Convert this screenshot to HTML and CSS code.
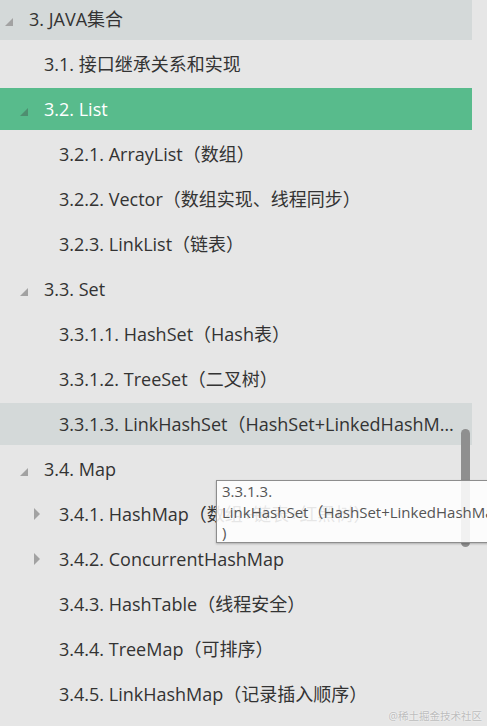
FILE: index.html
```html
<!DOCTYPE html>
<html lang="zh-CN">
<head>
<meta charset="utf-8">
<title>JAVA集合</title>
<link rel="stylesheet" href="styles.css">
</head>
<body>
<div class="pane">
  <ul class="tree">
    <li class="row l1 current"><span class="twisty open"><svg viewBox="0 0 10 10"><polygon points="9,1 9,9 1,9"/></svg></span><span class="label">3. JAVA集合</span></li>
    <li class="row l2"><span class="twisty"></span><span class="label">3.1. 接口继承关系和实现</span></li>
    <li class="row l2 selected"><span class="twisty open"><svg viewBox="0 0 10 10"><polygon points="9,1 9,9 1,9"/></svg></span><span class="label">3.2. List</span></li>
    <li class="row l3"><span class="twisty"></span><span class="label">3.2.1. ArrayList（数组）</span></li>
    <li class="row l3"><span class="twisty"></span><span class="label">3.2.2. Vector（数组实现、线程同步）</span></li>
    <li class="row l3"><span class="twisty"></span><span class="label">3.2.3. LinkList（链表）</span></li>
    <li class="row l2"><span class="twisty open"><svg viewBox="0 0 10 10"><polygon points="9,1 9,9 1,9"/></svg></span><span class="label">3.3. Set</span></li>
    <li class="row l3"><span class="twisty"></span><span class="label">3.3.1.1. HashSet（Hash表）</span></li>
    <li class="row l3"><span class="twisty"></span><span class="label">3.3.1.2. TreeSet（二叉树）</span></li>
    <li class="row l3 current"><span class="twisty"></span><span class="label">3.3.1.3. LinkHashSet（HashSet+LinkedHashMap）</span></li>
    <li class="row l2"><span class="twisty open"><svg viewBox="0 0 10 10"><polygon points="9,1 9,9 1,9"/></svg></span><span class="label">3.4. Map</span></li>
    <li class="row l3"><span class="twisty closed"><svg viewBox="0 0 8 12"><polygon points="1,0 7,6 1,12"/></svg></span><span class="label">3.4.1. HashMap（数组+链表+红黑树）</span></li>
    <li class="row l3"><span class="twisty closed"><svg viewBox="0 0 8 12"><polygon points="1,0 7,6 1,12"/></svg></span><span class="label">3.4.2. ConcurrentHashMap</span></li>
    <li class="row l3"><span class="twisty"></span><span class="label">3.4.3. HashTable（线程安全）</span></li>
    <li class="row l3"><span class="twisty"></span><span class="label">3.4.4. TreeMap（可排序）</span></li>
    <li class="row l3"><span class="twisty"></span><span class="label">3.4.5. LinkHashMap（记录插入顺序）</span></li>
  </ul>
  <div class="scrollbar"></div>
  <div class="tooltip">3.3.1.3.<br>LinkHashSet（HashSet+LinkedHashMap<br>)</div>
  <div class="watermark">@稀土掘金技术社区</div>
</div>
</body>
</html>
```

FILE: styles.css
```css
html, body {
  margin: 0;
  padding: 0;
  background: #e6e6e6;
  overflow: hidden;
}

.pane {
  position: relative;
  width: 487px;
  height: 726px;
  overflow: hidden;
  font-family: "Open Sans", "Noto Sans CJK SC", sans-serif;
  color: #333;
}

.tree {
  list-style: none;
  margin: -2px 0 0 0;
  padding: 0;
  width: 472px;
  display: flex;
  flex-direction: column;
  gap: 3px;
}

.row {
  height: 42px;
  display: flex;
  align-items: center;
  font-size: 18px;
  padding-right: 14px;
  box-sizing: border-box;
}

.row.l1 { padding-left: 0; }
.row.l2 { padding-left: 15px; }
.row.l3 { padding-left: 30px; }

.row.current { background: #d4d9d9; }
.row.selected { background: #58bb8c; color: #fff; }

.twisty {
  flex: 0 0 29px;
  height: 42px;
  position: relative;
}

.twisty svg {
  position: absolute;
  fill: #a2a2a2;
}

.twisty.open svg {
  left: 4px;
  top: 19px;
  width: 10px;
  height: 10px;
}

.row.selected .twisty svg { fill: rgba(60, 60, 60, 0.35); }

.twisty.closed svg {
  left: 3px;
  top: 15px;
  width: 8px;
  height: 12px;
}

.label {
  flex: 1 1 auto;
  min-width: 0;
  white-space: nowrap;
  overflow: hidden;
  text-overflow: ellipsis;
  line-height: 42px;
}

.scrollbar {
  position: absolute;
  left: 461px;
  top: 429px;
  width: 9px;
  height: 118px;
  border-radius: 5px;
  background: #8f8f8f;
}

.tooltip {
  position: absolute;
  left: 216px;
  top: 480px;
  width: 320px;
  height: 63px;
  box-sizing: border-box;
  padding: 0 0 0 5px;
  background: rgba(255, 255, 255, 0.88);
  border: 1px solid #8d8d8d;
  box-shadow: 0 1px 2px rgba(0, 0, 0, 0.25);
  font-size: 15px;
  line-height: 20.5px;
  color: #555;
  white-space: nowrap;
}

.watermark {
  position: absolute;
  right: 5px;
  bottom: 3px;
  font-size: 10.5px;
  color: #bdbdbd;
  text-shadow: 0 0 2px #fff;
}
```
